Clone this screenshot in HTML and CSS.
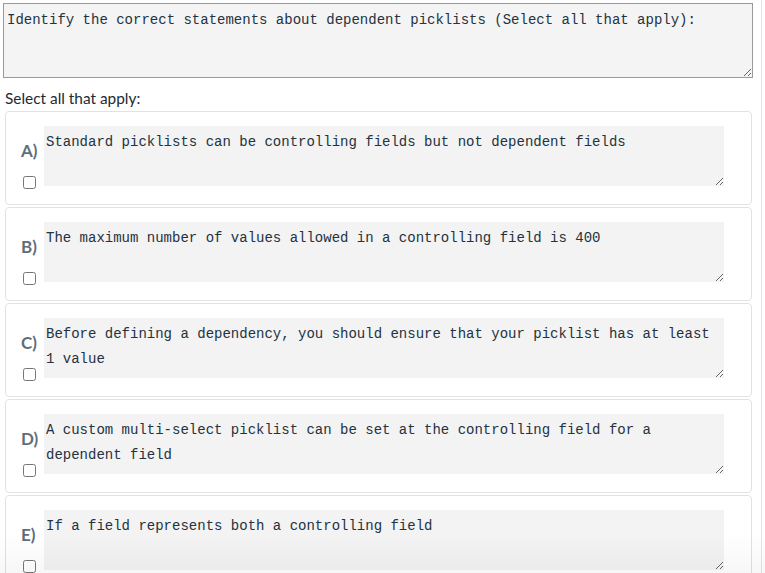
FILE: index.html
```html
<!DOCTYPE html>
<html>
<head>
<meta charset="utf-8">
<link rel="stylesheet" href="styles.css">
</head>
<body>
<div class="page">
  <textarea class="question" readonly>Identify the correct statements about dependent picklists (Select all that apply):</textarea>
  <div class="instr">Select all that apply:</div>
  <div class="cards">
    <div class="card">
      <div class="marker"><span class="letter">A)</span><input type="checkbox" class="check"></div>
      <textarea class="answer" readonly>Standard picklists can be controlling fields but not dependent fields</textarea>
    </div>
    <div class="card">
      <div class="marker"><span class="letter">B)</span><input type="checkbox" class="check"></div>
      <textarea class="answer" readonly>The maximum number of values allowed in a controlling field is 400</textarea>
    </div>
    <div class="card">
      <div class="marker"><span class="letter">C)</span><input type="checkbox" class="check"></div>
      <textarea class="answer" readonly>Before defining a dependency, you should ensure that your picklist has at least 1 value</textarea>
    </div>
    <div class="card">
      <div class="marker"><span class="letter">D)</span><input type="checkbox" class="check"></div>
      <textarea class="answer" readonly>A custom multi-select picklist can be set at the controlling field for a dependent field</textarea>
    </div>
    <div class="card">
      <div class="marker"><span class="letter">E)</span><input type="checkbox" class="check"></div>
      <textarea class="answer" readonly>If a field represents both a controlling field</textarea>
    </div>
  </div>
</div>
<div class="fade"></div>
</body>
</html>
```

FILE: styles.css
```css
html, body {
  margin: 0;
  padding: 0;
  background: #ffffff;
  overflow: hidden;
}

.page {
  width: 762px;
  min-height: 573px;
  box-sizing: border-box;
  padding: 3px 0 0 3px;
  border-right: 1px solid #e4e4e4;
}

.question {
  display: block;
  box-sizing: border-box;
  width: 750px;
  height: 75px;
  margin: 0;
  padding: 4px 3px 0 3px;
  border: 1px solid #9a9a9a;
  border-radius: 0;
  background: #f4f4f4;
  color: #24323f;
  font-family: "Liberation Mono", monospace;
  font-size: 14px;
  line-height: 25px;
  outline: none;
}

.instr {
  margin: 10px 0 3px 2px;
  height: 20px;
  line-height: 21px;
  font-family: "Lato", sans-serif;
  font-size: 15.4px;
  color: #222b35;
}

.cards {
  display: flex;
  flex-direction: column;
  gap: 2px;
  margin-left: 2px;
  width: 747px;
}

.card {
  display: flex;
  box-sizing: border-box;
  height: 94px;
  border: 1px solid #e2e2e2;
  border-radius: 4px;
  padding: 14px 0 0 0;
  background: #ffffff;
}

.marker {
  width: 38px;
  flex: none;
  display: flex;
  flex-direction: column;
  align-items: flex-start;
  padding: 15px 0 0 15px;
  box-sizing: border-box;
}

.letter {
  display: block;
  height: 20px;
  line-height: 20px;
  font-family: "Lato", sans-serif;
  font-weight: 700;
  font-size: 17px;
  color: #5f6e7d;
}

.check {
  margin: 15px 0 0 2px;
  width: 13px;
  height: 13px;
}

.answer {
  display: block;
  box-sizing: border-box;
  width: 680px;
  height: 60px;
  margin: 0;
  padding: 4px 2px 0 2px;
  border: none;
  border-radius: 0;
  background: #f3f3f3;
  color: #24323f;
  font-family: "Liberation Mono", monospace;
  font-size: 14px;
  line-height: 25px;
  outline: none;
}

.fade {
  position: fixed;
  left: 0;
  right: 0;
  bottom: 0;
  height: 40px;
  background: linear-gradient(to bottom, rgba(0,0,0,0), rgba(0,0,0,0.03));
  pointer-events: none;
}
```
